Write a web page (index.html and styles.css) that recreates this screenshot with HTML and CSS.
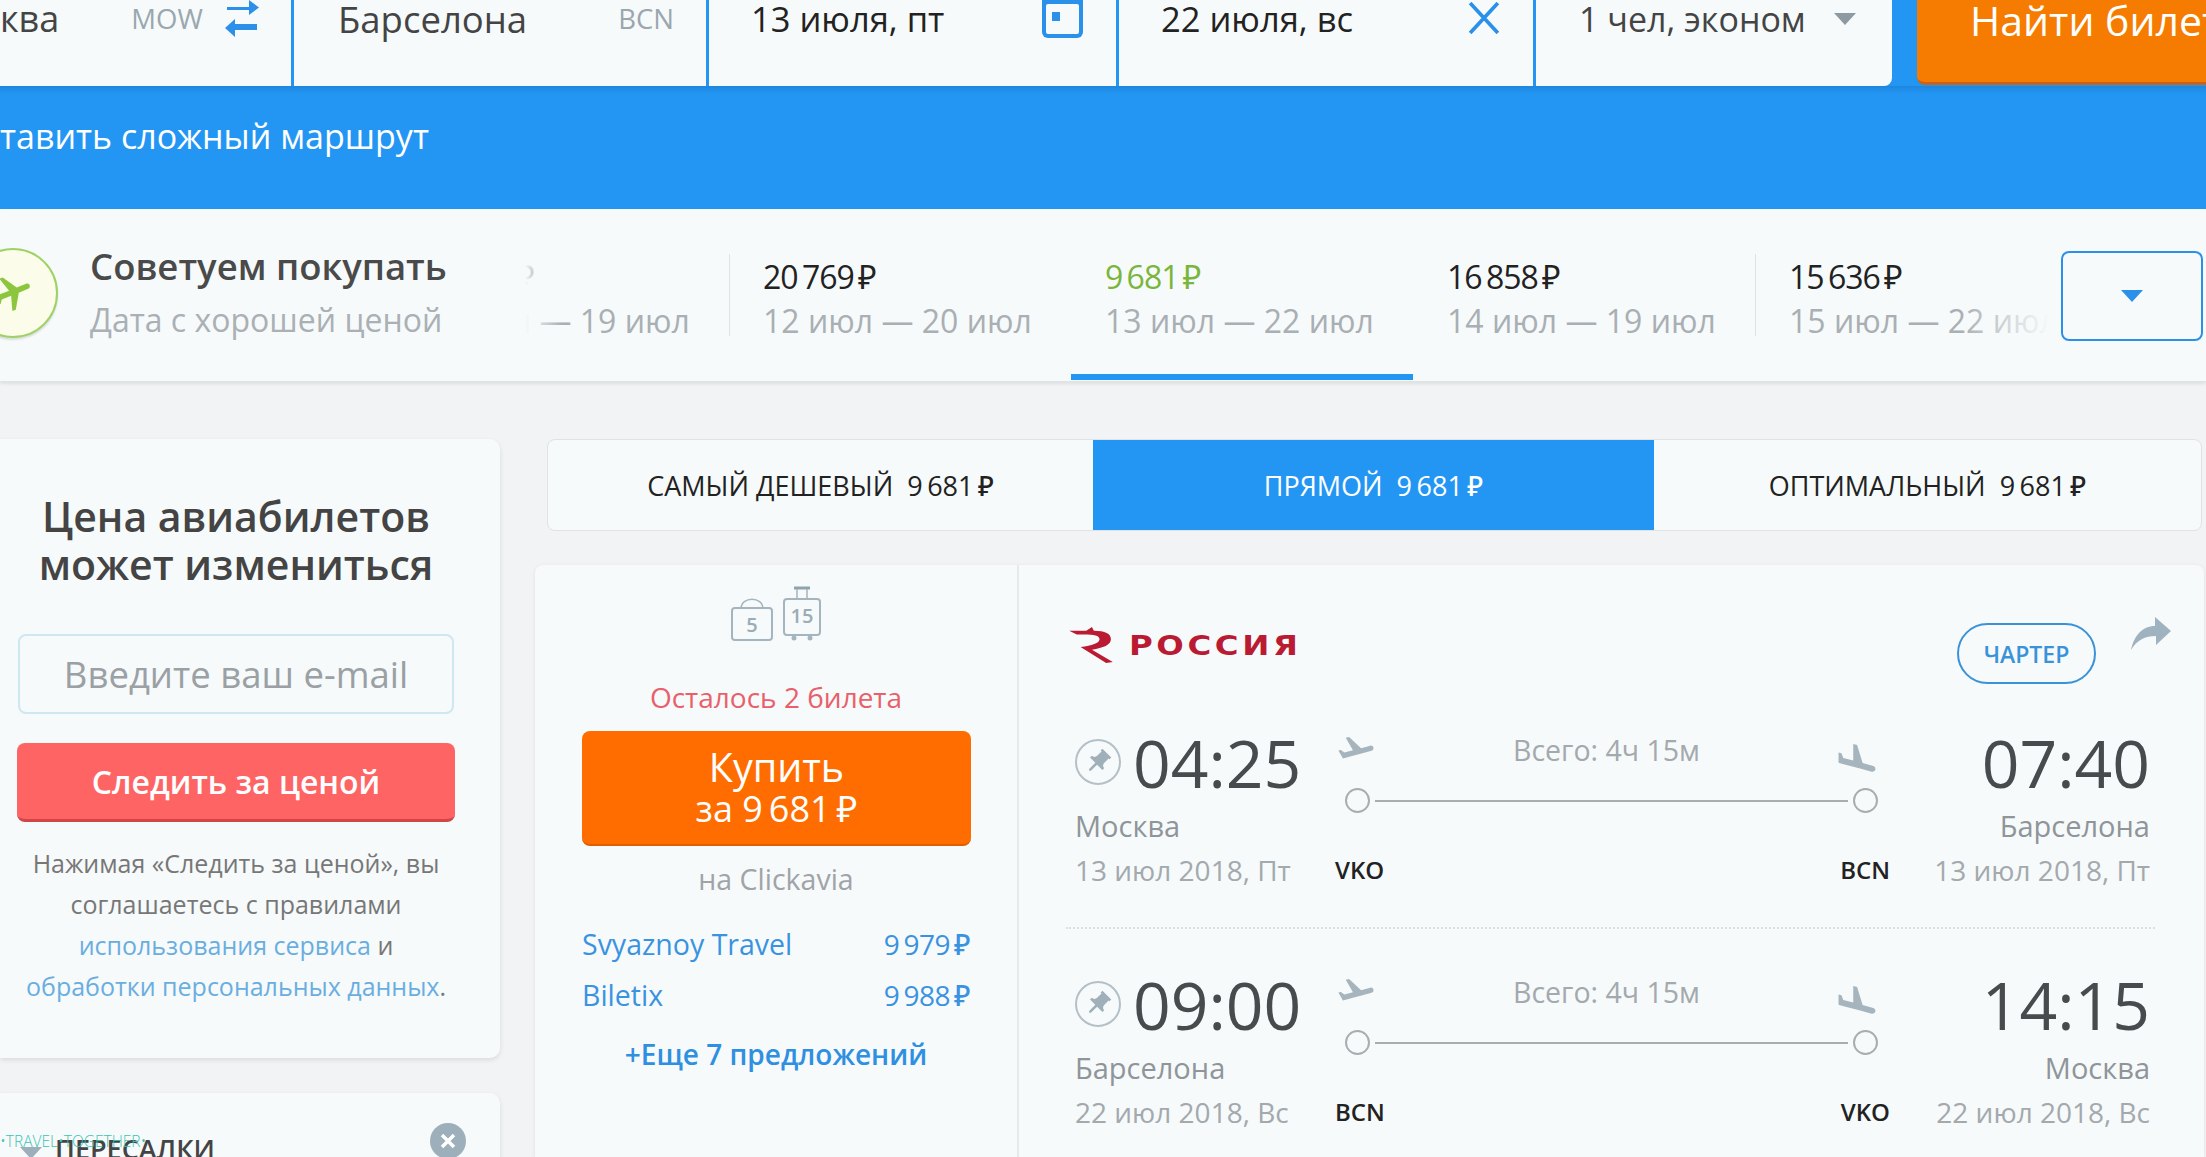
FILE: index.html
```html
<!DOCTYPE html>
<html lang="ru">
<head>
<meta charset="utf-8">
<title>Авиабилеты Москва — Барселона</title>
<link rel="stylesheet" href="styles.css">
</head>
<body>
<svg class="defs" aria-hidden="true">
  <symbol id="takeoff" viewBox="0 3 24 15"><path d="M22.07 9.64c-.21-.8-1.04-1.28-1.84-1.06L14.92 10l-6.9-6.43-1.93.51 4.14 7.17-4.97 1.33-1.97-1.54-1.45.39 1.82 3.16.77 1.33 1.6-.43 5.31-1.42 4.35-1.16L21 11.49c.81-.23 1.28-1.05 1.07-1.85z"/></symbol>
  <symbol id="land" viewBox="2 2 20 15"><path d="M9.68 13.27l4.35 1.16 5.31 1.42c.8.21 1.62-.26 1.84-1.06.21-.8-.26-1.62-1.06-1.84l-5.31-1.42-2.76-9.02L10.12 2v8.28L5.15 8.95l-.93-2.32-1.45-.39v5.17l1.6.43 5.31 1.43z"/></symbol>
  <symbol id="pin" viewBox="0 0 46 46"><circle cx="23" cy="23" r="22" fill="none" stroke="#b4c0c7" stroke-width="2"/><path fill="#9fb0bb" transform="translate(23 23) rotate(45) scale(1.25) translate(-12 -12)" d="M16 9V4h1V2H7v2h1v5c0 1.66-1.34 3-3 3v2h5.97v7l1 1 1-1v-7H19v-2c-1.66 0-3-1.34-3-3z"/></symbol>
</svg>
<div class="page">
  <header class="search">
    <div class="field field-from"><span class="value">ква</span><span class="code">MOW</span>
      <svg class="swap" viewBox="0 0 36 38"><path d="M3 7h22V0l10 7.500L25 15V10H3zM33 24H11v-5L1 28l10 9v-7h22z" fill="#2b90ea"/></svg>
    </div>
    <div class="field field-to"><span class="value">Барселона</span><span class="code">BCN</span></div>
    <div class="field field-date"><span class="value dark">13 июля, пт</span>
      <svg class="cal" viewBox="0 0 41 38"><path d="M0 0h41v32a6 6 0 0 1-6 6H6a6 6 0 0 1-6-6z" fill="#2b90ea"/><rect x="4" y="4" width="33" height="30" rx="2" fill="#f6fafb"/><rect x="10" y="12" width="8" height="9" fill="#2b90ea"/></svg>
    </div>
    <div class="field field-back"><span class="value dark">22 июля, вс</span>
      <svg class="clear" viewBox="0 0 30 30"><path d="M2 1l26 28M28 1L2 29" stroke="#2b90ea" stroke-width="3.500" fill="none"/></svg>
    </div>
    <div class="field field-pax"><span class="value">1 чел, эконом</span><i class="caret"></i></div>
    <button class="find">Найти билеты</button>
  </header>
  <div class="route"><span class="route-link">тавить сложный маршрут</span></div>

  <section class="strip">
    <div class="promo">
      <div class="promo-icon"><svg viewBox="0 0 24 24"><path fill="#8cc63f" transform="rotate(68 12 12)" d="M21 16v-2l-8-5V3.500c0-.83-.67-1.500-1.500-1.500S10 2.670 10 3.500V9l-8 5v2l8-2.500V19l-2 1.500V22l3.500-1 3.500 1v-1.500L13 19v-5.500l8 2.500z"/></svg></div>
      <div class="promo-text"><div class="promo-title">Советуем покупать</div><div class="promo-sub">Дата с хорошей ценой</div></div>
    </div>
    <div class="days">
      <div class="day day-first"><div class="price">15&thinsp;636&thinsp;₽</div><div class="dates">11 июл — 19 июл</div></div>
      <div class="day"><div class="price">20&thinsp;769&thinsp;₽</div><div class="dates">12 июл — 20 июл</div></div>
      <div class="day day-active"><div class="price">9&thinsp;681&thinsp;₽</div><div class="dates">13 июл — 22 июл</div></div>
      <div class="day day-plain"><div class="price">16&thinsp;858&thinsp;₽</div><div class="dates">14 июл — 19 июл</div></div>
      <div class="day day-last"><div class="price">15&thinsp;636&thinsp;₽</div><div class="dates">15 июл — 22 июл</div></div>
    </div>
    <div class="fade-left"></div>
    <div class="fade-right"></div>
    <button class="more"><i></i></button>
  </section>

  <main class="content">
    <aside class="side">
      <section class="card watch">
        <h2>Цена авиабилетов<br>может измениться</h2>
        <input class="email" placeholder="Введите ваш e-mail">
        <button class="follow">Следить за ценой</button>
        <p>Нажимая «Следить за ценой», вы<br>соглашаетесь с правилами<br><a>использования сервиса</a> и<br><a>обработки персональных данных</a>.</p>
      </section>
      <section class="card stops">
        <i class="tri"></i><span>ПЕРЕСАЛКИ</span>
        <svg class="close" viewBox="0 0 36 36"><circle cx="18" cy="18" r="18" fill="#9cafba"/><path d="M12 12l12 12M24 12L12 24" stroke="#fff" stroke-width="3.500"/></svg>
        <div class="mark">•TRAVEL•TOGETHER•</div>
      </section>
    </aside>
    <div class="results">
      <nav class="tabs">
        <div class="tab">САМЫЙ ДЕШЕВЫЙ&nbsp; 9&thinsp;681&thinsp;₽</div>
        <div class="tab tab-on">ПРЯМОЙ&nbsp; 9&thinsp;681&thinsp;₽</div>
        <div class="tab">ОПТИМАЛЬНЫЙ&nbsp; 9&thinsp;681&thinsp;₽</div>
      </nav>
      <article class="ticket">
        <div class="buy">
          <div class="bags">
            <svg class="bag" viewBox="0 0 44 48"><path d="M11 15C11 2 33 2 33 15" fill="none" stroke="#a5b5bf" stroke-width="1.500"/><rect x="2" y="14" width="40" height="32" rx="3" fill="none" stroke="#a5b5bf" stroke-width="2"/><text x="22" y="38" text-anchor="middle" class="bag-num">5</text></svg>
            <svg class="case" viewBox="0 0 40 56"><path d="M12 2h16" stroke="#8fa3ae" stroke-width="3"/><path d="M15 3v11M25 3v11" stroke="#a5b5bf" stroke-width="1.500"/><rect x="2" y="13" width="36" height="36" rx="3" fill="none" stroke="#a5b5bf" stroke-width="2"/><circle cx="12" cy="52" r="2.500" fill="#a5b5bf"/><circle cx="28" cy="52" r="2.500" fill="#a5b5bf"/><text x="20" y="37" text-anchor="middle" class="bag-num">15</text></svg>
          </div>
          <div class="left">Осталось 2 билета</div>
          <button class="pay"><span class="pay-a">Купить</span><span class="pay-b">за 9&thinsp;681&thinsp;₽</span></button>
          <div class="via">на Clickavia</div>
          <div class="offer"><span>Svyaznoy Travel</span><span class="offer-price">9&thinsp;979&thinsp;₽</span></div>
          <div class="offer"><span>Biletix</span><span class="offer-price">9&thinsp;988&thinsp;₽</span></div>
          <div class="alloffers">+Еще 7 предложений</div>
        </div>
        <div class="info">
          <div class="info-top">
            <div class="logo">
              <svg viewBox="0 0 46 38"><path fill="#bb1a33" d="M0 4L18 4L24 0L26 4C38 4 44 7 44 13C44 19 36 22 24 24L46 37L39 38L12 21C24 20 32 17 32 13C32 9 26 8 16 8L8 8Z"/></svg>
              <span>РОССИЯ</span>
            </div>
            <span class="charter">ЧАРТЕР</span>
            <svg class="share" viewBox="0 0 40 34"><path fill="#9fb2bf" d="M24 0l16 14-15 14v-9C14 19 6 23 0 33 3 19 11 9 24 9z"/></svg>
          </div>
          <div class="flight">
            <div class="end">
              <div class="time-row"><svg class="pin"><use href="#pin"/></svg><span class="time">04:25</span></div>
              <div class="city">Москва</div>
              <div class="date">13 июл 2018, Пт</div>
            </div>
            <div class="path">
              <div class="path-top"><svg class="pl"><use href="#takeoff"/></svg><span class="total">Всего: 4ч 15м</span><svg class="pl pl-land"><use href="#land"/></svg></div>
              <div class="line"><i class="dot"></i><i class="rule"></i><i class="dot"></i></div>
              <div class="codes"><span>VKO</span><span>BCN</span></div>
            </div>
            <div class="end end-r">
              <div class="time-row"><span class="time">07:40</span></div>
              <div class="city">Барселона</div>
              <div class="date">13 июл 2018, Пт</div>
            </div>
          </div>
          <div class="divider"></div>
          <div class="flight">
            <div class="end">
              <div class="time-row"><svg class="pin"><use href="#pin"/></svg><span class="time">09:00</span></div>
              <div class="city">Барселона</div>
              <div class="date">22 июл 2018, Вс</div>
            </div>
            <div class="path">
              <div class="path-top"><svg class="pl"><use href="#takeoff"/></svg><span class="total">Всего: 4ч 15м</span><svg class="pl pl-land"><use href="#land"/></svg></div>
              <div class="line"><i class="dot"></i><i class="rule"></i><i class="dot"></i></div>
              <div class="codes"><span>BCN</span><span>VKO</span></div>
            </div>
            <div class="end end-r">
              <div class="time-row"><span class="time">14:15</span></div>
              <div class="city">Москва</div>
              <div class="date">22 июл 2018, Вс</div>
            </div>
          </div>
        </div>
      </article>
    </div>
  </main>
</div>
</body>
</html>
```
FILE: styles.css
```css
* { box-sizing: border-box; }
html, body { margin: 0; height: 100%; }
body { width: 2206px; height: 1157px; overflow: hidden; background: #f1f3f5; font-family: "Open Sans", "Noto Sans", sans-serif; color: #444; }
.defs { display: none; }
.page { width: 2206px; height: 1157px; overflow: hidden; }
button { font-family: inherit; border: 0; padding: 0; }

/* search */
.search { display: flex; height: 86px; background: #2396f3; }
.field { display: flex; flex: none; align-items: flex-start; height: 86px; background: #f6fafb; margin-right: 3px; line-height: 38px; font-size: 34.500px; }
.value { color: #444; white-space: nowrap; }
.value.dark { color: #222; }
.code { color: #9aa7ae; font-size: 27.500px; margin-left: auto; }
.field-from { width: 291px; }
.field-from .value { font-size: 36px; }
.field-from .code { margin-left: 72px; }
.swap { width: 38px; height: 38px; margin-left: 20px; }
.field-to { width: 412px; padding: 0 32px 0 44px; }
.field-to .value { font-size: 36.500px; }
.field-date { width: 407px; padding: 0 33px 0 42px; justify-content: space-between; }
.cal { width: 41px; height: 38px; }
.field-back { width: 414px; padding: 0 33px 0 42px; justify-content: space-between; }
.clear { width: 32px; height: 32px; margin-top: 2px; }
.field-pax { width: 356px; padding: 0 36px 0 43px; border-radius: 0 0 8px 0; justify-content: space-between; }
.field-pax .value { font-size: 34px; }
.caret { width: 0; height: 0; margin-top: 13px; border-left: 11px solid transparent; border-right: 11px solid transparent; border-top: 12px solid #8d9aa2; }
.find { width: 320px; height: 85px; margin-left: 22px; border-radius: 0 0 0 8px; background: #f57c00; border-bottom: 3px solid #c9621a; color: #fff; font-size: 41px; font-weight: 500; line-height: 40px; text-align: left; padding: 0 0 42px 53px; white-space: nowrap; flex: none; }
.route { height: 123px; background: #2396f3; color: #fff; font-size: 34px; font-weight: 500; line-height: 44px; padding-top: 28px; white-space: nowrap; box-shadow: inset 0 8px 6px -6px rgba(0,40,90,.2); }

/* date strip */
.strip { display: flex; position: relative; height: 173px; background: #f6fafb; border-bottom: 1px solid #dfe3e6; box-shadow: 0 2px 3px rgba(0,0,0,.08); overflow: hidden; }
.promo { width: 387px; flex: none; display: flex; padding-top: 39px; position: relative; z-index: 2; }
.promo-icon { width: 90px; height: 90px; margin-left: -32px; flex: none; border-radius: 50%; border: 2px solid #9ed264; background: #fbfce9; box-shadow: 0 2px 2px rgba(0,0,0,.12); display: flex; align-items: center; justify-content: center; }
.promo-icon svg { width: 44px; height: 44px; }
.promo-text { margin-left: 32px; white-space: nowrap; }
.promo-title { font-size: 36.500px; font-weight: 600; color: #4a4a4a; line-height: 44px; margin-top: -4px; }
.promo-sub { font-size: 32px; color: #aab0b4; line-height: 44px; margin-top: 10px; }
.days { display: flex; flex: none; }
.day { width: 342px; height: 171px; padding: 46px 0 0 34px; position: relative; white-space: nowrap; }
.day::before { content: ""; position: absolute; left: 0; top: 45px; height: 82px; width: 1px; background: #dfe3e6; }
.day-first::before, .day-active::before, .day-plain::before { display: none; }
.price { font-size: 32px; line-height: 44px; color: #222; letter-spacing: -1px; }
.dates { font-size: 32px; line-height: 44px; color: #a9afb3; }
.day-active { background: #f6fafb; border-bottom: 6px solid #2396f3; }
.day-active .price { color: #7ab53c; }
.fade-left { position: absolute; left: 387px; top: 30px; width: 175px; height: 110px; background: linear-gradient(90deg, #f6fafb 79%, rgba(246,250,251,0)); }
.fade-right { position: absolute; left: 1960px; top: 30px; width: 100px; height: 110px; background: linear-gradient(90deg, rgba(246,250,251,0), #f6fafb 90%); }
.more { position: absolute; left: 2061px; top: 42px; width: 142px; height: 90px; background: #f6fafb; border: 2px solid #2b90ea; border-radius: 8px; display: flex; align-items: center; justify-content: center; }
.more i { width: 0; height: 0; border-left: 11px solid transparent; border-right: 11px solid transparent; border-top: 12px solid #2b90ea; }

/* layout */
.content { display: flex; padding-top: 57px; }
.side { width: 500px; flex: none; display: flex; flex-direction: column; gap: 35px; }
.card { background: #f6fafb; border-radius: 0 10px 10px 0; box-shadow: 0 2px 5px rgba(0,0,0,.1); }
.watch { height: 619px; padding: 53px 0 0 18px; width: 500px; }
.watch h2 { margin: 0 0 0 -18px; width: 472px; text-align: center; font-size: 41px; font-weight: 600; line-height: 48px; color: #444; }
.email { display: block; width: 436px; height: 80px; margin-top: 46px; border: 2px solid #cfe6f3; border-radius: 8px; background: #f6fafb; font: 36.500px "Open Sans", sans-serif; text-align: center; outline: 0; }
.email::placeholder { color: #9aa0a4; opacity: 1; }
.follow { display: block; width: 438px; height: 79px; margin: 29px 0 0 -1px; border-radius: 8px; background: #ff6464; border-bottom: 3px solid #d04646; color: #fff; font-size: 32px; font-weight: 600; }
.watch p { margin: 21px 0 0 -18px; width: 472px; text-align: center; font-size: 25px; line-height: 41px; color: #777; white-space: nowrap; }
.watch a { color: #6aaee0; }
.stops { position: relative; height: 120px; padding: 37px 0 0 55px; font-size: 27px; font-weight: 600; color: #444; border-radius: 0 10px 0 0; }
.tri { position: absolute; left: 20px; top: 54px; width: 0; height: 0; border-left: 11px solid transparent; border-right: 11px solid transparent; border-top: 12px solid #9cafba; }
.close { position: absolute; left: 430px; top: 30px; width: 36px; height: 36px; }
.mark { position: absolute; left: 0; top: 37px; font-size: 15.500px; font-weight: 300; color: #3cc4b4; white-space: nowrap; }

/* results */
.results { margin-left: 35px; width: 1669px; }
.tabs { display: flex; height: 92px; margin-left: 12px; width: 1655px; background: #f6fafb; border: 1px solid #dfe3e6; border-radius: 8px; overflow: hidden; }
.tab { display: flex; align-items: center; justify-content: center; flex: none; width: 545px; height: 100%; font-size: 27px; font-weight: 500; color: #222; white-space: nowrap; }
.tab-on { width: 561px; background: #2396f3; color: #fff; }
.tab:last-child { flex: 1; }
.ticket { display: flex; height: 592px; margin-top: 34px; width: 1669px; background: #f6fafb; border-radius: 8px 8px 0 0; box-shadow: 0 1px 4px rgba(0,0,0,.08); }
.buy { width: 484px; flex: none; border-right: 2px solid #e6eaed; padding: 21px 47px 0; }
.bags { display: flex; justify-content: center; align-items: flex-end; gap: 8px; height: 56px; }
.bag { width: 44px; height: 48px; }
.case { width: 40px; height: 56px; }
.bag-num { font: 600 20px "Open Sans", sans-serif; fill: #9aacb7; }
.left { margin-top: 37px; text-align: center; font-size: 28px; line-height: 36px; color: #e9606a; }
.pay { display: flex; flex-direction: column; align-items: center; justify-content: center; width: 389px; height: 115px; margin-top: 16px; border-radius: 8px; background: #ff6d00; border-bottom: 2px solid #e05e00; color: #fff; }
.pay-a { font-size: 39.500px; font-weight: 500; line-height: 42px; }
.pay-b { font-size: 36px; line-height: 42px; }
.via { margin-top: 15px; text-align: center; font-size: 28.500px; line-height: 36px; color: #a0a4a8; }
.offer { display: flex; justify-content: space-between; margin-top: 29px; font-size: 28.500px; line-height: 22px; color: #3a93e0; }
.via + .offer { margin-top: 36px; }
.offer-price { font-weight: 500; font-size: 28px; letter-spacing: -.5px; }
.alloffers { margin-top: 30px; text-align: center; font-size: 28px; font-weight: 600; line-height: 36px; color: #2f8fe0; }
.info { flex: 1; padding: 51px 0 0 47px; width: 0; }
.info-top { display: flex; align-items: flex-start; height: 104px; position: relative; }
.logo { display: flex; align-items: center; gap: 13px; padding-top: 11px; }
.logo svg { width: 50px; height: 36px; }
.logo span { display: inline-block; font: 700 27px "DejaVu Sans", sans-serif; color: #bb1a33; letter-spacing: 3px; transform: scaleX(1.2); transform-origin: left; }
.charter { position: absolute; left: 891px; top: 7px; width: 139px; height: 61px; border: 2px solid #3a93d8; border-radius: 31px; display: flex; align-items: center; justify-content: center; font-size: 23px; font-weight: 600; color: #3a93d8; }
.share { position: absolute; left: 1065px; top: 1px; width: 40px; height: 34px; }
.flight { display: grid; grid-template-columns: 269px 555px 265px; width: 1089px; height: 207px; }
.end { padding-left: 9px; }
.end-r { padding: 0 5px 0 0; text-align: right; }
.time-row { display: flex; align-items: center; height: 84px; }
.end-r .time-row { justify-content: flex-end; }
.pin { width: 46px; height: 46px; margin-right: 12px; flex: none; }
.time { font-size: 66px; line-height: 84px; color: #484b4d; }
.city { font-size: 29px; font-weight: 500; line-height: 40px; color: #8f9599; margin-top: 2px; }
.date { font-size: 28px; line-height: 40px; color: #a3a9ad; margin-top: 4px; white-space: nowrap; }
.path { padding: 16px 0 0; }
.path-top { display: flex; justify-content: space-between; align-items: flex-start; height: 52px; padding: 0 12px 0 0; }
.pl { width: 42px; height: 26px; fill: #a6b4bd; }
.pl-land { height: 30px; margin-top: 8px; }
.total { font-size: 28.500px; line-height: 28px; color: #a3a9ad; }
.line { display: flex; align-items: center; padding: 0 12px 0 10px; }
.dot { width: 25px; height: 25px; border: 2px solid #a9adb0; border-radius: 50%; flex: none; }
.rule { flex: 1; height: 2px; background: #a9adb0; margin: 0 5px; }
.codes { display: flex; justify-content: space-between; margin-top: 42px; font-size: 24px; font-weight: 600; line-height: 30px; color: #222; }
.divider { height: 0; width: 1089px; border-top: 2px dotted #dadfe2; margin: 0 0 33px; }
```
